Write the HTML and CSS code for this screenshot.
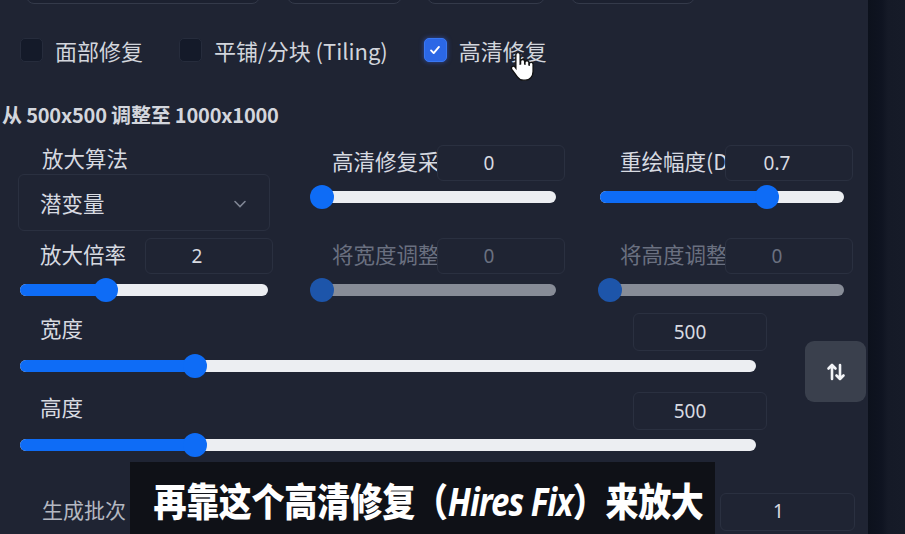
FILE: index.html
```html
<!DOCTYPE html>
<html lang="zh">
<head>
<meta charset="utf-8">
<link rel="stylesheet" href="styles.css">
</head>
<body>
<div class="page">
  <main class="panel">
    <div class="top-boxes">
      <div class="tb tb1"></div>
      <div class="tb tb2"></div>
      <div class="tb tb3"></div>
      <div class="tb tb4"></div>
    </div>

    <div class="checks">
      <label class="check"><span class="cb"></span><span class="check-text">面部修复</span></label>
      <label class="check"><span class="cb"></span><span class="check-text">平铺/分块 (Tiling)</span></label>
      <label class="check"><span class="cb cb-on"><svg viewBox="0 0 16 16" width="14" height="14"><path d="M3.5 8.5l3 3 6-7" fill="none" stroke="#fff" stroke-width="2.2" stroke-linecap="round" stroke-linejoin="round"/></svg></span><span class="check-text">高清修复</span></label>
    </div>

    <div class="note">从 500x500 调整至 1000x1000</div>

    <div class="hires-grid">
      <div class="cell">
        <div class="plain-label">放大算法</div>
        <div class="dropdown">
          <span>潜变量</span>
          <svg class="chev" viewBox="0 0 14 10" width="14" height="10"><path d="M2 2.5l5 5 5-5" fill="none" stroke="#7f8594" stroke-width="1.6" stroke-linecap="round"/></svg>
        </div>
      </div>
      <div class="cell field">
        <div class="head"><div class="lbl"><span>高清修复采样步数</span></div><div class="numbox">0</div></div>
        <div class="slider"><div class="track"><div class="fill" style="--f:0"></div><div class="thumb" style="--f:0"></div></div></div>
      </div>
      <div class="cell field">
        <div class="head"><div class="lbl"><span>重绘幅度(Denoising strength)</span></div><div class="numbox">0.7</div></div>
        <div class="slider"><div class="track"><div class="fill" style="--f:0.7"></div><div class="thumb" style="--f:0.7"></div></div></div>
      </div>

      <div class="cell field">
        <div class="head"><div class="lbl"><span>放大倍率</span></div><div class="numbox">2</div></div>
        <div class="slider"><div class="track"><div class="fill" style="--f:0.3333"></div><div class="thumb" style="--f:0.3333"></div></div></div>
      </div>
      <div class="cell field disabled">
        <div class="head"><div class="lbl"><span>将宽度调整到</span></div><div class="numbox">0</div></div>
        <div class="slider"><div class="track"><div class="fill" style="--f:0"></div><div class="thumb" style="--f:0"></div></div></div>
      </div>
      <div class="cell field disabled">
        <div class="head"><div class="lbl"><span>将高度调整到</span></div><div class="numbox">0</div></div>
        <div class="slider"><div class="track"><div class="fill" style="--f:0"></div><div class="thumb" style="--f:0"></div></div></div>
      </div>
    </div>

    <div class="size-block">
      <div class="size-fields">
        <div class="field wide">
          <div class="head"><div class="lbl"><span>宽度</span></div><div class="numbox">500</div></div>
          <div class="slider"><div class="track"><div class="fill" style="--f:0.2298"></div><div class="thumb" style="--f:0.2298"></div></div></div>
        </div>
        <div class="field wide">
          <div class="head"><div class="lbl"><span>高度</span></div><div class="numbox">500</div></div>
          <div class="slider"><div class="track"><div class="fill" style="--f:0.2298"></div><div class="thumb" style="--f:0.2298"></div></div></div>
        </div>
      </div>
      <button class="swap" type="button">
        <svg viewBox="0 0 24 24" width="24" height="24"><path d="M8 19V5M4.5 8.5L8 5l3.5 3.5M16 5v14M12.5 15.5L16 19l3.5-3.5" fill="none" stroke="#f2f4f7" stroke-width="2.6" stroke-linecap="round" stroke-linejoin="round"/></svg>
      </button>
    </div>

    <div class="batch-row">
      <div class="batch-label">生成批次</div>
      <div class="numbox batch-box">1</div>
    </div>
  </main>
  <aside class="strip"></aside>

  <div class="subtitle"><span class="sub-text">再靠这个高清修复（<i>Hires Fix</i>）来放大</span></div>

  <svg class="cursor" viewBox="0 0 24 30" width="27" height="34">
    <path d="M8 2.2c1.1 0 1.9.8 1.9 1.9v8.3l.4-.1V10c0-1 .8-1.7 1.8-1.7s1.8.8 1.8 1.7v2.4l.3.1v-1.4c0-1 .8-1.7 1.8-1.7s1.7.8 1.7 1.7v2.1l.3.1v-.8c0-1 .8-1.6 1.7-1.6s1.7.7 1.7 1.6v6.6c0 4.4-2.9 7.6-7 7.6h-1.6c-2.6 0-4.1-1.1-5.4-3L2.5 17.2c-.6-.9-.4-2 .4-2.6.8-.5 1.9-.4 2.5.4l.7 1V4.1C6.1 3 6.9 2.2 8 2.2z" fill="#fff" stroke="#111" stroke-width="1.2"/>
  </svg>
</div>
</body>
</html>
```

FILE: styles.css
```css
* { box-sizing: border-box; }

html, body {
  margin: 0;
  padding: 0;
  background: #1f2433;
}

body {
  width: 905px;
  height: 534px;
  overflow: hidden;
  font-family: "Noto Sans CJK SC", "Noto Sans", sans-serif;
  color: #d7dae1;
}

.page {
  position: relative;
  display: flex;
  width: 905px;
  height: 534px;
  overflow: hidden;
}

.panel {
  width: 868px;
  flex: none;
  background: #1f2433;
}

.strip {
  flex: 1;
  background: linear-gradient(90deg, #0c111c 0px, #0f1421 14px, #151a27 20px, #161b28 100%);
}

/* top boxes, mostly scrolled out of view */
.top-boxes {
  display: flex;
  height: 30px;
  margin-top: -26px;
}
.tb {
  height: 30px;
  border: 1px solid #343a4a;
  border-radius: 8px;
  background: #1c2130;
}
.tb1 { margin-left: 26px; width: 234px; }
.tb2 { margin-left: 27px; width: 115px; }
.tb3 { margin-left: 25px; width: 118px; }
.tb4 { margin-left: 26px; width: 124px; }

/* checkbox row */
.checks {
  display: flex;
  align-items: center;
  gap: 36px;
  margin-top: 34px;
  padding-left: 20px;
  height: 24px;
}
.check {
  display: flex;
  align-items: center;
  gap: 12px;
}
.cb {
  width: 23px;
  height: 24px;
  border-radius: 5px;
  background: #141a29;
  border: 1px solid #262c3c;
  display: flex;
  align-items: center;
  justify-content: center;
}
.cb-on {
  background: #2b67e6;
  border-color: #3a78f2;
  box-shadow: 0 0 5px rgba(60, 110, 255, 0.55);
}
.check-text {
  font-size: 22px;
  line-height: 24px;
  color: #d2d5dc;
}

.note {
  margin-top: 42px;
  padding-left: 2px;
  font-size: 20px;
  font-weight: 700;
  line-height: 22px;
  color: #d3d6dd;
  letter-spacing: -0.2px;
}

/* hires grid */
.hires-grid {
  display: grid;
  grid-template-columns: 252px 248px 248px;
  grid-auto-rows: 93px;
  column-gap: 40px;
  margin-top: 18px;
  padding-left: 18px;
}

.plain-label {
  height: 30px;
  padding-left: 24px;
  font-size: 21.5px;
  line-height: 28px;
  color: #d7dae1;
}

.dropdown {
  height: 57px;
  border: 1px solid #2a3040;
  border-radius: 6px;
  display: flex;
  align-items: center;
  justify-content: space-between;
  padding: 0 22px 0 21px;
  font-size: 21.5px;
  color: #d7dae1;
}
.chev { margin-top: 2px; }

.head {
  display: flex;
  align-items: center;
  height: 38px;
}
.lbl {
  width: 127px;
  flex: none;
  padding-left: 22px;
  padding-bottom: 4px;
  font-size: 21.5px;
  line-height: 28px;
  color: #d7dae1;
}
.lbl span {
  display: block;
  overflow: hidden;
  white-space: nowrap;
}
.numbox {
  flex: none;
  width: 128px;
  height: 36px;
  border: 1px solid #2a3040;
  border-radius: 6px;
  padding-right: 24px;
  text-align: center;
  font-size: 19px;
  line-height: 34px;
  color: #d7dae1;
  font-family: "Noto Sans", "Noto Sans CJK SC", sans-serif;
}
.cell .head .numbox { margin-right: -8px; }

.slider {
  height: 30px;
  display: flex;
  align-items: center;
  padding: 0 2px;
}
.track {
  position: relative;
  width: 100%;
  height: 12px;
  border-radius: 6px;
  background: #eceef2;
}
.fill {
  height: 12px;
  border-radius: 6px 0 0 6px;
  background: #0e6cf6;
  width: calc(10px + var(--f) * (100% - 20px));
}
.thumb {
  position: absolute;
  top: 50%;
  left: calc(10px + var(--f) * (100% - 20px));
  width: 24px;
  height: 24px;
  margin: -12px 0 0 -12px;
  border-radius: 50%;
  background: #0e6cf6;
}

.disabled .lbl,
.disabled .numbox { color: #6a7080; }
.disabled .track { background: #878c97; }
.disabled .fill { background: #1d55aa; }
.disabled .thumb { background: #1d55aa; }

/* width / height block */
.size-block {
  display: flex;
  align-items: flex-start;
  margin-top: -18px;
  padding-left: 18px;
}
.size-fields {
  width: 740px;
  flex: none;
}
.wide .head { height: 39px; }
.wide .lbl { flex: 1; width: auto; padding-bottom: 8px; }
.wide .numbox {
  width: 134px;
  height: 38px;
  margin-right: -9px;
  padding-right: 20px;
  line-height: 36px;
}
.wide + .wide { margin-top: 10px; }

.swap {
  margin: 29px 0 0 47px;
  width: 61px;
  height: 61px;
  border: none;
  border-radius: 9px;
  background: #3a404d;
  display: flex;
  align-items: center;
  justify-content: center;
  padding: 0;
}

.batch-row {
  display: flex;
  align-items: center;
  margin-top: 33px;
  padding-left: 42px;
  height: 38px;
}
.batch-label {
  width: 678px;
  font-size: 21px;
  line-height: 28px;
  padding-bottom: 6px;
  color: #b4b8c1;
}
.batch-box {
  width: 135px;
  height: 38px;
  padding-right: 18px;
}

/* video subtitle overlay */
.subtitle {
  position: absolute;
  left: 130px;
  top: 462px;
  width: 585px;
  height: 72px;
  background: rgba(14, 16, 22, 0.93);
  display: flex;
  align-items: center;
  justify-content: center;
  padding: 4px 0 0 12px;
}
.sub-text {
  display: inline-block;
  font-size: 33px;
  font-weight: 900;
  color: #ffffff;
  letter-spacing: -0.3px;
  white-space: nowrap;
  transform: scaleY(1.17);
}
.sub-text i {
  font-family: "Noto Sans", "Noto Sans CJK SC", sans-serif;
  font-style: italic;
  font-weight: 700;
  letter-spacing: -1px;
}

.cursor {
  position: absolute;
  left: 509px;
  top: 50px;
}
```
